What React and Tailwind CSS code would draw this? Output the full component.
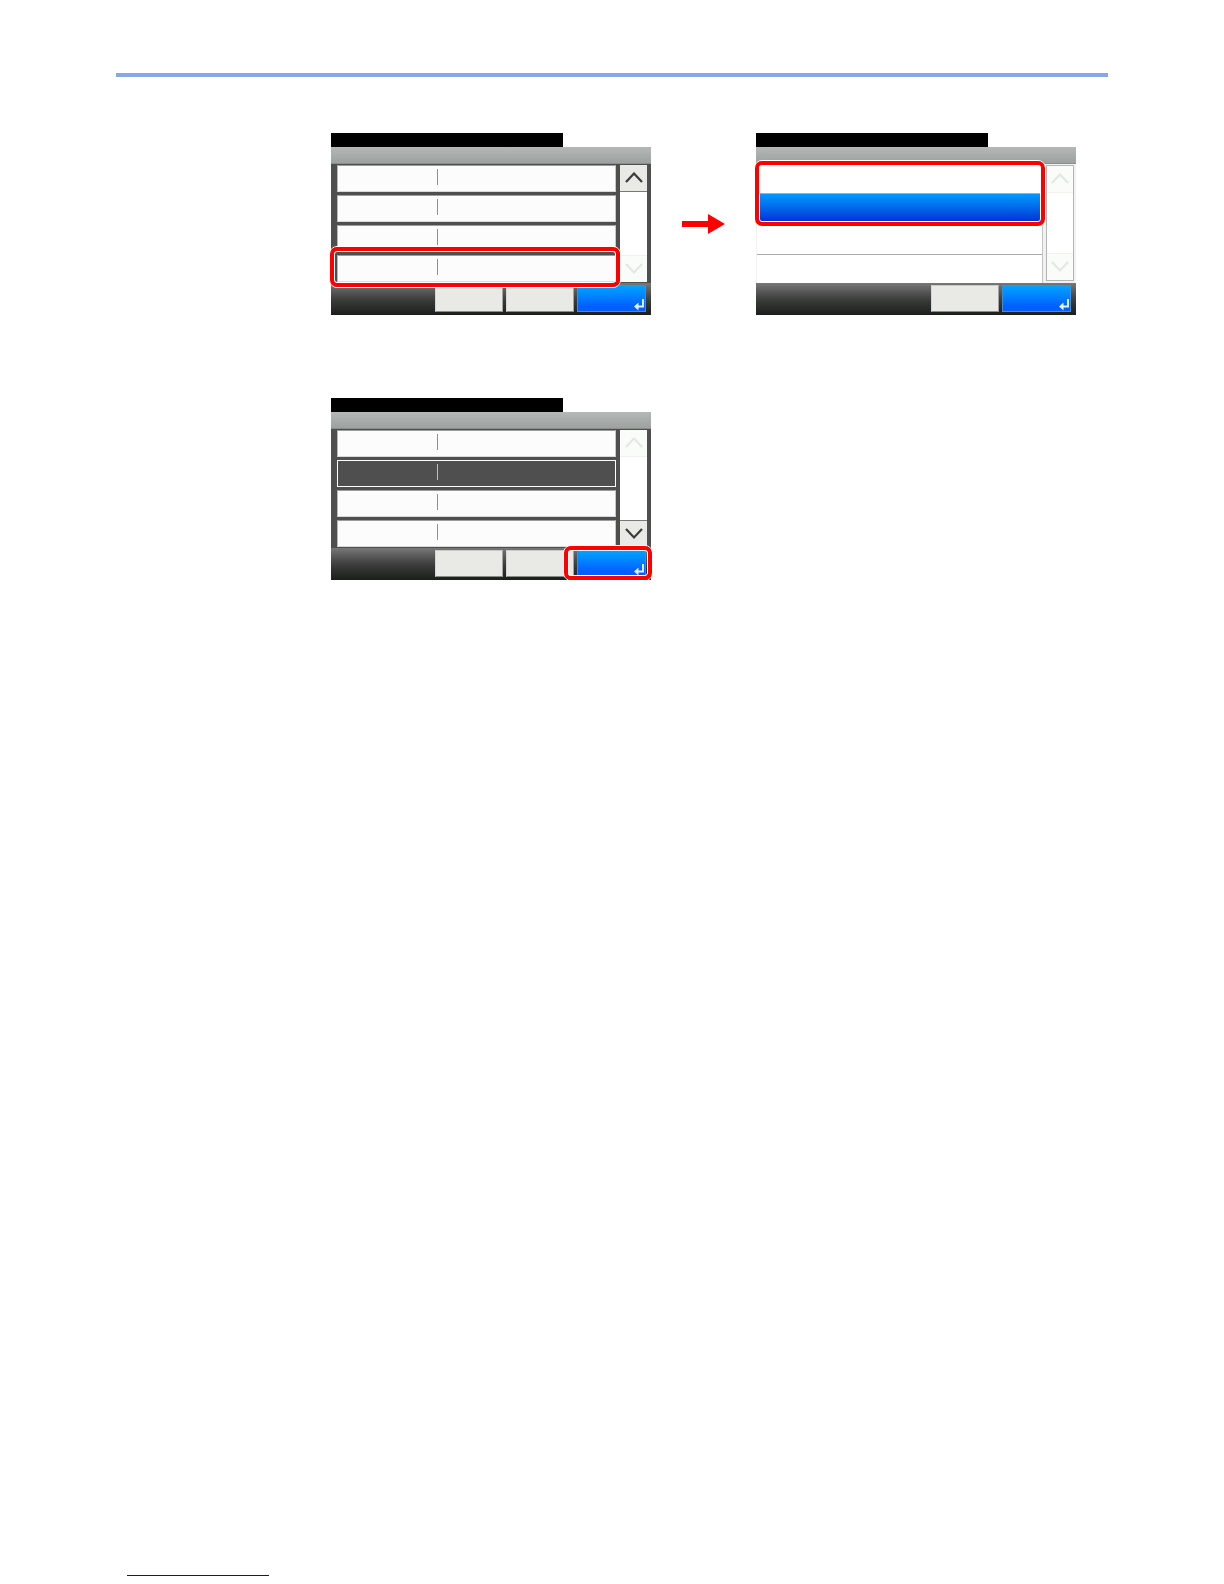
function Chevron({ down }) {
    return (
        <svg width="18" height="12" viewBox="0 0 18 12" fill="none" strokeWidth="2.2" aria-hidden="true">
            <path d={down ? "M1 1L9 9.5L17 1" : "M1 10L9 1.5L17 10"} stroke="currentColor" />
        </svg>
    );
}

function Highlight({ className }) {
    return (
        <div className={`absolute pointer-events-none rounded-lg border border-white ${className}`}>
            <div className="h-full rounded-[7px] border-4 border-[#ff0000]">
                <div className="h-full rounded-[3px] border border-white" />
            </div>
        </div>
    );
}

function ScrollButton({ down, enabled }) {
    const label = down ? "Scroll down" : "Scroll up";
    const tone = enabled
        ? "bg-[#e9eae6] text-[#3a3b3a] border-[#777877]"
        : "bg-[#fafcf9] text-[#e2e9e0] border-[#f0f2ef]";

    return (
        <button
            aria-label={label}
            disabled={!enabled}
            className={`flex h-[27px] items-center justify-center ${down ? "border-t" : "border-b"} ${tone}`}
        >
            <Chevron down={down} />
        </button>
    );
}

function Scrollbar({ up, down, light }) {
    return (
        <div className={`flex flex-col justify-between bg-white ${light ? "w-7 border border-[#b4b6b5]" : "w-[27px]"}`}>
            <ScrollButton enabled={up} />
            <ScrollButton down enabled={down} />
        </div>
    );
}

function Footer({ plain }) {
    return (
        <div className="flex h-8 items-start justify-end gap-[3px] bg-linear-to-b from-[#777877] via-[#3d3e3d] to-[#1b1f1a] pt-[2px] pr-[5px]">
            {plain.map((label) => (
                <button
                    key={label}
                    aria-label={label}
                    className="h-[27px] w-[68px] border border-t-[#c9cac6] border-l-[#d6d7d3] border-r-[#a5a6a2] border-b-[#8a8b87] bg-[#e9eae5]"
                />
            ))}
            <button
                aria-label="OK"
                className="flex h-[27px] w-[69px] items-end justify-end border border-[#3f8fd8] bg-linear-to-b from-[#00a2ff] to-[#0060ff] to-80% pr-px"
            >
                <svg width="10" height="12" viewBox="0 0 10 12" fill="none" aria-hidden="true">
                    <path d="M9 0V7.5H3" stroke="#e4f2ff" strokeWidth="1.9" />
                    <path d="M0 7.5L4.5 3.5V11.5Z" fill="#e4f2ff" />
                </svg>
            </button>
        </div>
    );
}

function Panel({ children }) {
    return (
        <section className="relative w-80 shrink-0">
            <div className="h-[14px] w-[232px] bg-black" />
            <div className="h-[17px] border-b border-[#8b8e8c] bg-linear-to-b from-[#b4b8b6] to-[#9da19f]" />
            {children}
        </section>
    );
}

function SettingsPanel({ selected, up, down, children }) {
    return (
        <Panel>
            <div className="flex gap-1 bg-[#4e4f4e] py-px pr-1 pl-[6px]">
                <div className="flex flex-1 flex-col gap-[3px]">
                    {[0, 1, 2, 3].map((row) => (
                        <button
                            key={row}
                            aria-label={`Setting ${row + 1}`}
                            className={`flex h-[27px] border pt-[3px] pl-[99px] ${
                                row === selected
                                    ? "border-white bg-[#4e4f4e]"
                                    : "border-t-[#9b9c9b] border-l-[#b8b9b8] border-r-[#c8c9c8] border-b-[#d8d9d8] bg-[#fcfcfc]"
                            }`}
                        >
                            <span className={`h-4 w-px ${row === selected ? "bg-[#bdbebd]" : "bg-[#8f908f]"}`} />
                        </button>
                    ))}
                </div>
                <Scrollbar up={up} down={down} />
            </div>
            <Footer plain={["Cancel", "Back"]} />
            {children}
        </Panel>
    );
}

function ChoicePanel() {
    return (
        <Panel>
            <div className="flex gap-[3px] bg-[#f0f1f0] pr-[2px] pl-px">
                <div className="flex flex-1 flex-col border-r border-[#c2c3c2] bg-white">
                    <button aria-label="Option 1" className="h-[30px] border-b border-[#aaabaa]" />
                    <button aria-label="Option 2" className="h-[30px] bg-linear-to-b from-[#0098ff] to-[#0220d0]" />
                    <button aria-label="Option 3" className="h-[31px] border-b border-[#a9aaa9]" />
                    <button aria-label="Option 4" className="h-7" />
                </div>
                <div className="flex pt-px pb-[2px]">
                    <Scrollbar light />
                </div>
            </div>
            <Footer plain={["Cancel"]} />
            <Highlight className="-left-[2px] top-[27px] h-[67px] w-[292px]" />
        </Panel>
    );
}

export default function App() {
    return (
        <div className="flex min-h-screen flex-col bg-white font-['Liberation_Sans',sans-serif]">
            <header className="mx-[116px] mt-[73px] h-1 bg-[#86a7e8]" />

            <main className="mt-14 ml-[331px] flex flex-col gap-[83px]">
                <div className="flex items-center gap-[31px]">
                    <SettingsPanel up>
                        <Highlight className="-left-[2px] top-[113px] h-[42px] w-[292px]" />
                    </SettingsPanel>
                    <svg width="43" height="20" viewBox="0 0 43 20" className="shrink-0" aria-hidden="true">
                        <path d="M0 7H26V0L43 10L26 20V13H0Z" fill="#ff0000" />
                    </svg>
                    <ChoicePanel />
                </div>
                <SettingsPanel selected={1} down>
                    <Highlight className="-right-[2px] -bottom-px h-9 w-[90px]" />
                </SettingsPanel>
            </main>

            <footer className="mt-auto pb-2 pl-[127px]">
                <a href="#contents" aria-label="Contents" className="block h-4 w-[142px] border-b border-[#10107c]" />
            </footer>
        </div>
    );
}
